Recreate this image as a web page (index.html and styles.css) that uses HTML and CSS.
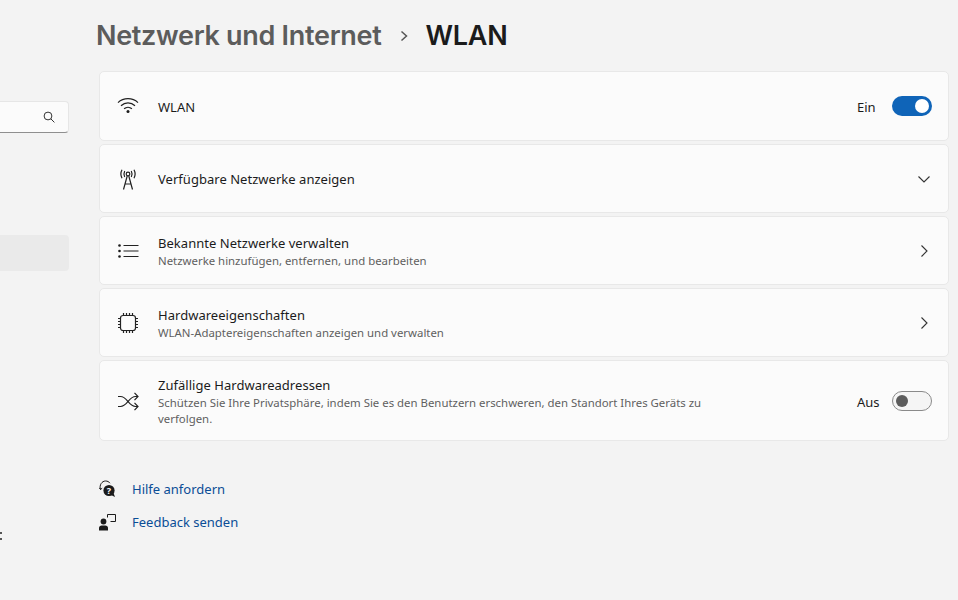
FILE: index.html
```html
<!DOCTYPE html>
<html lang="de">
<head>
<meta charset="utf-8">
<title>WLAN</title>
<link rel="stylesheet" href="styles.css">
</head>
<body>
<div class="app">
  <aside class="sidebar">
    <div class="search">
      <svg class="search-icon" width="12" height="12" viewBox="0 0 12 12"><circle cx="5" cy="5" r="3.9"/><path d="M7.8 7.8 11.4 11.4"/></svg>
    </div>
    <div class="nav-selected"></div>
    <div class="nav-cut"><i></i><i></i></div>
  </aside>
  <main class="main">
    <header class="crumbs">
      <span class="crumb-parent">Netzwerk und Internet</span>
      <svg class="crumb-sep" width="8" height="12" viewBox="0 0 8 12"><path d="M1.5 1.5 6.5 6 1.5 10.5"/></svg>
      <span class="crumb-current">WLAN</span>
    </header>
    <section class="cards">
      <div class="card card-wlan">
        <svg class="icon" width="22" height="22" viewBox="0 0 22 22"><path d="M1 7.6C6.5 2.4 15.5 2.4 21 7.6M4 10.8C8 7 14 7 18 10.8M7.1 13.8C9.3 11.8 12.7 11.8 14.9 13.8"/><circle class="fill" cx="11" cy="16.4" r="1.5"/></svg>
        <div class="text text-low"><div class="title">WLAN</div></div>
        <span class="state">Ein</span>
        <span class="toggle on"><b></b></span>
      </div>
      <div class="card card-net">
        <svg class="icon" width="22" height="22" viewBox="0 0 22 22"><circle cx="11" cy="6" r="1.8"/><path d="M7.7 9C6.8 7.2 6.8 4.8 7.7 3M14.3 9C15.2 7.2 15.2 4.8 14.3 3M5 10.2C3.6 7.6 3.6 4.4 5 1.8M17 10.2C18.4 7.6 18.4 4.4 17 1.8M10.2 8 6.5 21.5M11.8 8 15.5 21.5M8.2 16H13.8"/></svg>
        <div class="text"><div class="title">Verfügbare Netzwerke anzeigen</div></div>
        <svg class="chev" width="14" height="14" viewBox="0 0 14 14"><path d="M1.5 4.5 7 10 12.5 4.5"/></svg>
      </div>
      <div class="card card-net">
        <svg class="icon" width="22" height="22" viewBox="0 0 22 22"><path d="M6.5 5.5H21.5M6.5 11H21.5M6.5 16.5H21.5"/><circle class="fill" cx="2.5" cy="5.5" r="1.3"/><circle class="fill" cx="2.5" cy="11" r="1.3"/><circle class="fill" cx="2.5" cy="16.5" r="1.3"/></svg>
        <div class="text text-low"><div class="title">Bekannte Netzwerke verwalten</div><div class="sub">Netzwerke hinzufügen, entfernen, und bearbeiten</div></div>
        <svg class="chev" width="14" height="14" viewBox="0 0 14 14"><path d="M4.5 1.5 10 7 4.5 12.5"/></svg>
      </div>
      <div class="card card-net">
        <svg class="icon" width="22" height="22" viewBox="0 0 22 22"><rect x="3.5" y="3.5" width="15" height="15" rx="2.5"/><path d="M6.5 1V3.5M9.5 1V3.5M12.5 1V3.5M15.5 1V3.5M6.5 18.5V21M9.5 18.5V21M12.5 18.5V21M15.5 18.5V21M1 6.5H3.5M1 9.5H3.5M1 12.5H3.5M1 15.5H3.5M18.5 6.5H21M18.5 9.5H21M18.5 12.5H21M18.5 15.5H21"/></svg>
        <div class="text text-low"><div class="title">Hardwareeigenschaften</div><div class="sub">WLAN-Adaptereigenschaften anzeigen und verwalten</div></div>
        <svg class="chev" width="14" height="14" viewBox="0 0 14 14"><path d="M4.5 1.5 10 7 4.5 12.5"/></svg>
      </div>
      <div class="card card-rand">
        <svg class="icon" width="22" height="22" viewBox="0 0 22 22"><path d="M1 6.5H3.5C7 6.5 8.5 8.5 11 11.5C13.5 14.5 15 16.5 18.5 16.5H21M1 16.5H3.5C7 16.5 8.5 14.5 11 11.5C13.5 8.5 15 6.5 18.5 6.5H21M17.5 2.8 21 6.5 17.5 10.2M17.5 12.8 21 16.5 17.5 20.2"/></svg>
        <div class="text text-low"><div class="title">Zufällige Hardwareadressen</div><div class="sub sub-wrap">Schützen Sie Ihre Privatsphäre, indem Sie es den Benutzern erschweren, den Standort Ihres Geräts zu verfolgen.</div></div>
        <span class="state">Aus</span>
        <span class="toggle off"><b></b></span>
      </div>
    </section>
    <nav class="links">
      <a class="link">
        <svg width="18" height="18" viewBox="0 0 18 18"><path class="thin" d="M1.5 9.5C0 5 3 1 6.5 1C8.5 1 10 1.8 11 3.2M1.5 9.5 0.2 7.8M1.5 9.5 3.2 8.2"/><circle class="fill" cx="10" cy="10.5" r="5.6"/><path class="fill" d="M12 15 16 17 14.5 13Z"/><text class="q" x="10" y="13.6" text-anchor="middle">?</text></svg>
        <span>Hilfe anfordern</span>
      </a>
      <a class="link">
        <svg width="18" height="18" viewBox="0 0 18 18"><circle class="fill" cx="4.5" cy="8.5" r="2.9"/><path class="fill" d="M0 17.5V15C0 13.2 1.2 12.4 2.6 12.4H6.4C7.8 12.4 9 13.2 9 15V17.5Z"/><path class="thin" d="M8.5 4.5V1.5H16.5V8.5H11.5"/></svg>
        <span>Feedback senden</span>
      </a>
    </nav>
  </main>
</div>
</body>
</html>
```
FILE: styles.css
```css
* { box-sizing: border-box; }
html, body { margin: 0; height: 100%; }
body {
  background: #f3f3f3;
  color: #1b1b1b;
  font-family: "Noto Sans", "Open Sans", sans-serif;
  font-size: 13px;
  overflow: hidden;
}
.app { display: flex; height: 600px; width: 958px; }

.sidebar { width: 69px; flex: none; padding-top: 101px; position: relative; }
.search {
  height: 32px;
  background: #fbfbfb;
  border: 1px solid #e6e6e6;
  border-bottom: 1px solid #8f8f8f;
  border-left: 0;
  border-radius: 0 4px 4px 0;
  display: flex;
  align-items: center;
  justify-content: flex-end;
  padding-right: 13px;
}
.search-icon { fill: none; stroke: #333; stroke-width: 1; }
.nav-selected { height: 36px; margin-top: 102px; background: #eaeaea; border-radius: 0 4px 4px 0; }
.nav-cut { position: absolute; left: 0; top: 532px; width: 2px; height: 8px; display: flex; flex-direction: column; justify-content: space-between; }
.nav-cut i { display: block; height: 2px; background: #555; }

.main { flex: 1; padding-left: 30px; min-width: 0; }
.crumbs { height: 71px; margin-left: -3px; display: flex; align-items: center; padding-top: 1px; font-family: Inter, "Noto Sans", sans-serif; font-size: 27px; font-weight: 600; line-height: 36px; }
.crumb-parent { color: #5c5c5c; letter-spacing: -0.3px; }
.crumb-sep { margin: 0 17px 0 19px; fill: none; stroke: #555; stroke-width: 1.5; }
.crumb-current { color: #1b1b1b; letter-spacing: -0.2px; }

.cards { width: 850px; display: flex; flex-direction: column; gap: 3px; }
.card {
  display: flex;
  align-items: center;
  background: #fbfbfb;
  border: 1px solid #e8e8e8;
  border-radius: 5px;
  padding: 0 16px 0 17px;
}
.card-wlan { height: 70px; }
.card-net { height: 69px; }
.card-rand { height: 81px; }
.icon { flex: none; fill: none; stroke: #222; stroke-width: 1.2; margin-right: 19px; }
.icon .fill, .fill { fill: #1b1b1b; stroke: none; }
.text { flex: 1; min-width: 0; }
.text-low { padding-top: 2px; }
.title { font-size: 13px; line-height: 18px; color: #1b1b1b; letter-spacing: 0.03px; }
.sub { font-size: 11.4px; line-height: 16px; color: #5f5f5f; margin-top: 1px; }
.sub-wrap { max-width: 570px; }
.state { flex: none; width: 35px; font-size: 13px; color: #1b1b1b; position: relative; top: 1px; }
.chev { flex: none; fill: none; stroke: #333; stroke-width: 1.1; margin-right: 1px; }
.toggle { flex: none; width: 40px; height: 20px; border-radius: 10px; display: flex; align-items: center; }
.toggle b { display: block; border-radius: 50%; }
.toggle.on { background: #0f64b8; justify-content: flex-end; padding-right: 3px; }
.toggle.on b { width: 14px; height: 14px; background: #fff; }
.toggle.off { background: #f5f5f5; border: 1px solid #8a8a8a; padding-left: 3px; }
.toggle.off b { width: 12px; height: 12px; background: #5c5c5c; }

.links { margin-top: 38px; display: flex; flex-direction: column; gap: 13px; }
.link { display: flex; align-items: center; height: 20px; gap: 15px; color: #0a4d96; font-size: 13px; }
.link svg { flex: none; }
.thin { fill: none; stroke: #1b1b1b; stroke-width: 1; }
.q { font-size: 9px; font-weight: 700; fill: #fff; }
```
